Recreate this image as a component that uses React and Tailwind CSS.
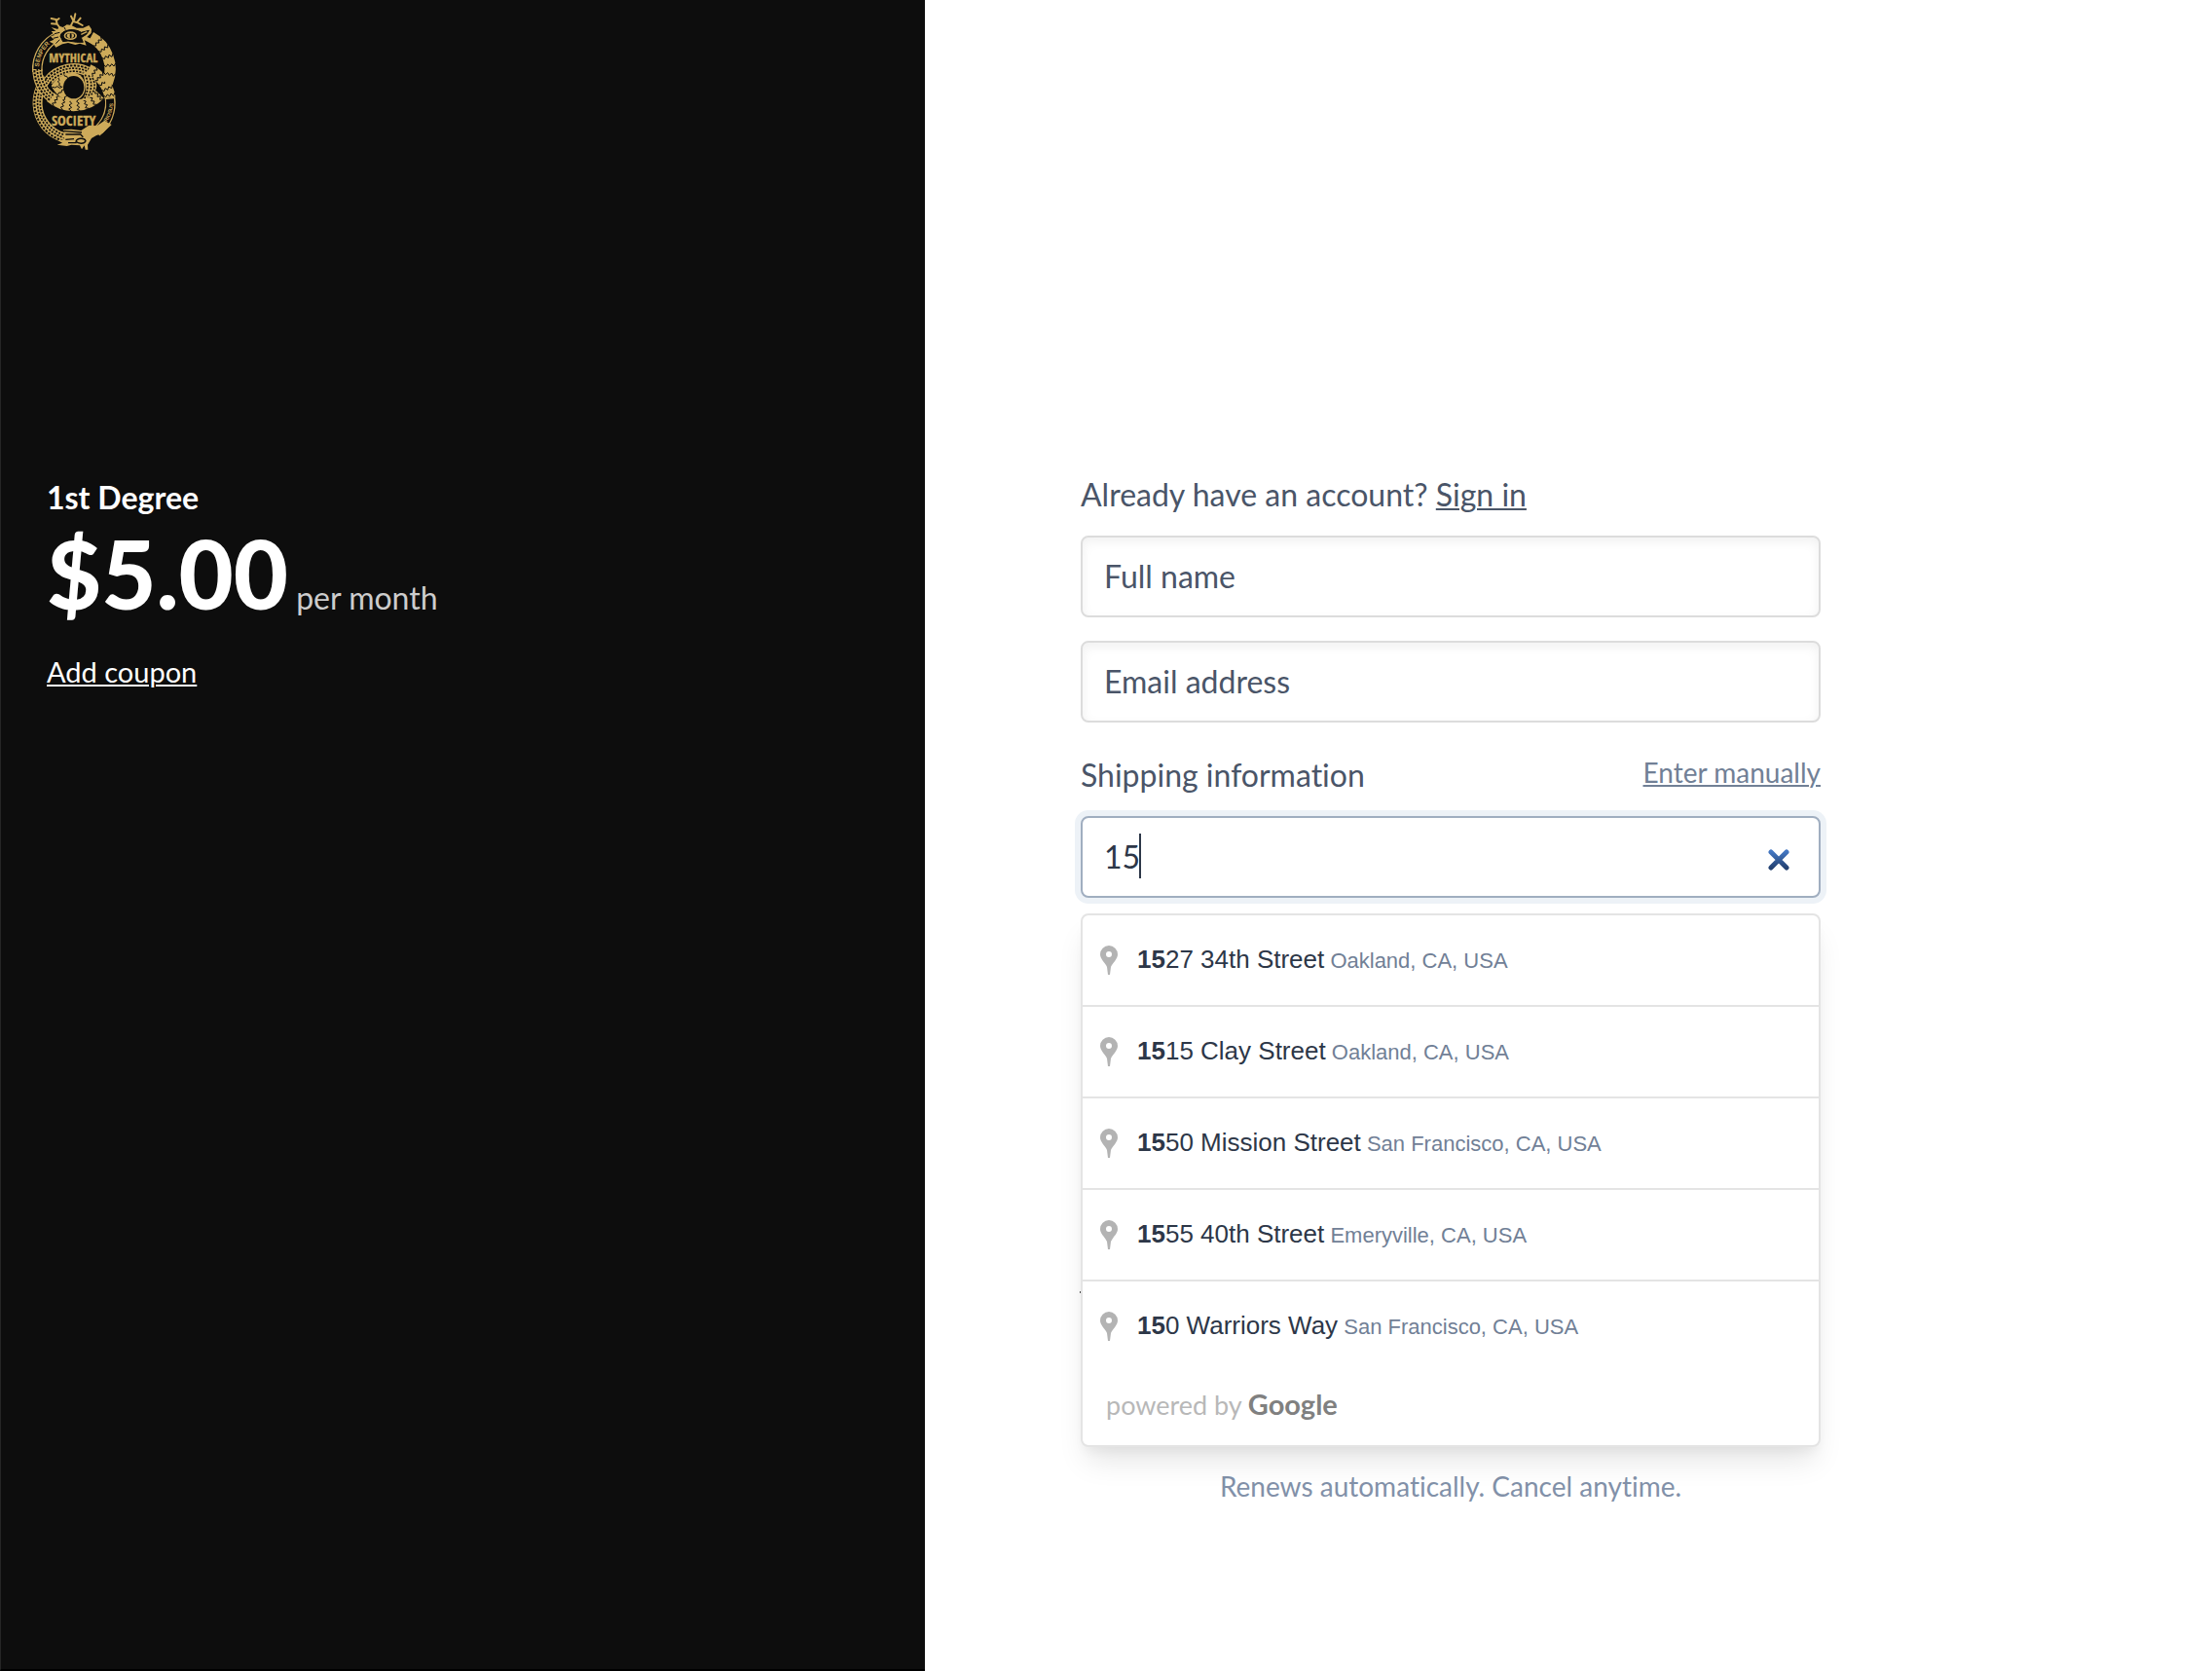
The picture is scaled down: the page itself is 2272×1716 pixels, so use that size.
import { useState } from 'react'

const GOLD = '#cdaa5a'
const INK = '#0d0d0d'

const SUGGESTIONS = [
  { match: '15', rest: '27 34th Street', area: 'Oakland, CA, USA' },
  { match: '15', rest: '15 Clay Street', area: 'Oakland, CA, USA' },
  { match: '15', rest: '50 Mission Street', area: 'San Francisco, CA, USA' },
  { match: '15', rest: '55 40th Street', area: 'Emeryville, CA, USA' },
  { match: '15', rest: '0 Warriors Way', area: 'San Francisco, CA, USA' }
]

const polar = (cx, cy, r, deg) => {
  const a = (deg * Math.PI) / 180
  return [Math.round(cx + r * Math.cos(a)), Math.round(cy + r * Math.sin(a))]
}

// Arc going clockwise from one angle to another, 0deg points right
const arc = (cx, cy, r, from, to) => {
  const [x1, y1] = polar(cx, cy, r, from)
  const [x2, y2] = polar(cx, cy, r, to)
  return `M${x1} ${y1}A${r} ${r} 0 ${to - from > 180 ? 1 : 0} 1 ${x2} ${y2}`
}

// Jagged line across the serpent's body
const zigzag = (cx, cy, r1, r2, deg) => {
  const pts = []
  for (let i = 0; i <= 6; i++) {
    pts.push(polar(cx, cy, r1 + ((r2 - r1) * i) / 6, deg + (i % 2 ? 2 : -2)).join(','))
  }
  return pts.join(' ')
}

function Scales({ cx, cy, r, from, to }) {
  return (
    <g fill="none">
      <path d={arc(cx, cy, r, from, to)} stroke={GOLD} strokeWidth="30" />
      <path d={arc(cx, cy, r + 9, from, to)} stroke={INK} strokeWidth="6" strokeDasharray="7 4" />
      <path d={arc(cx, cy, r, from, to)} stroke={INK} strokeWidth="5" strokeDasharray="6 4" strokeDashoffset="4" />
      <path d={arc(cx, cy, r - 9, from, to)} stroke={INK} strokeWidth="5" strokeDasharray="6 4" />
    </g>
  )
}

function Bands({ cx, cy, r, from, to, angles }) {
  return (
    <g fill="none">
      <path d={arc(cx, cy, r, from, to)} stroke={GOLD} strokeWidth="34" />
      {angles.map(a => (
        <polyline key={a} points={zigzag(cx, cy, r - 18, r + 18, a)} stroke={INK} strokeWidth="3" />
      ))}
    </g>
  )
}

function Logo() {
  return (
    <svg viewBox="36 39 264 426" className="h-[142px] w-[88px]" role="img" aria-label="Mythical Society">
      <defs>
        <path id="semper" d={arc(167, 213, 107, 184, 240)} />
        <path id="curiosus" d="M255 394A120 120 0 0 0 289 306" />
      </defs>

      {/* lower serpent */}
      <Scales cx={167} cy={317} r={112} from={80} to={222} />
      <Scales cx={167} cy={311} r={100} from={218} to={300} />
      <Bands cx={167} cy={317} r={113} from={294} to={352} angles={[304, 315, 326, 337, 348]} />
      <path d={arc(167, 317, 113, 352, 412)} fill="none" stroke={GOLD} strokeWidth="32" />
      <path d={arc(167, 317, 113, 354, 405)} fill="none" stroke={INK} strokeWidth="24" />

      {/* upper serpent */}
      <Bands cx={167} cy={213} r={112} from={-62} to={22} angles={[-48, -34, -20, -6, 8]} />
      <Bands cx={167} cy={213} r={112} from={44} to={130} angles={[47, 59, 71, 83, 95, 107, 120]} />
      <path d={arc(167, 213, 112, 176, 246)} fill="none" stroke={GOLD} strokeWidth="32" />
      <path d={arc(167, 213, 112, 180, 244)} fill="none" stroke={INK} strokeWidth="24" />
      <Scales cx={167} cy={213} r={112} from={128} to={180} />

      {/* eye */}
      <path d="M196 222C224 230 238 246 238 265C236 288 216 308 188 312C204 296 207 280 203 262Z" fill={GOLD} />
      <path d="M225 240C234 256 234 276 221 292M213 232C224 250 224 278 210 300M202 230C213 250 213 278 200 304" fill="none" stroke={INK} strokeWidth="5" strokeDasharray="6 4" />
      <path d="M98 264C112 240 136 226 164 224C188 224 203 245 203 268C203 294 184 309 164 313C132 309 110 290 98 264Z" fill={GOLD} />
      <path d="M120 240l3 7-5 5 6 5-2 6 7 4M101 268l9 2 6-4 8 5 9-4M118 292l4-7 7 0 2-8 8-1M140 307l-1-8 7-3-1-8M137 229l3 6 6 0 3 7" fill="none" stroke={INK} strokeWidth="3" />
      <ellipse cx="167" cy="269" rx="32" ry="35" fill={INK} />

      {/* lettering */}
      <g fill={GOLD} stroke={GOLD} strokeWidth="1" fontFamily="'Open Sans Condensed', 'Roboto Condensed', sans-serif" fontWeight="700" textAnchor="middle">
        <text x="166" y="193" fontSize="38">MYTHICAL</text>
        <text x="167" y="386" fontSize="44">SOCIETY</text>
      </g>
      <g fill={GOLD} fontFamily="'Liberation Sans', sans-serif" fontWeight="700">
        <text fontSize="19"><textPath href="#semper">SEMPER</textPath></text>
        <text fontSize="16"><textPath href="#curiosus">CURIOSUS</textPath></text>
      </g>

      {/* antlered head */}
      <g fill="none" stroke={GOLD} strokeWidth="6" strokeLinecap="round">
        <path d="M128 90L116 74L99 73M116 74L113 60L98 57M113 64L122 57M158 80L166 64L159 50M166 66L180 70L194 78M168 62L172 43M178 68L188 56" />
      </g>
      <path d="M98 96L112 96L98 84L118 90L122 80L134 84L146 76L160 78L176 86L196 86L214 78L222 90L221 102L208 114L228 122L222 134L200 124L206 140L186 134L172 138L150 132L132 136L112 146L104 134L92 128L106 122L96 112L108 108Z" fill={GOLD} />
      <path d="M126 112C128 90 172 86 190 100L214 94L206 106L190 116L196 130L176 130L150 126L134 128ZM108 104L124 100M104 118L120 114M112 134L124 122M138 84L142 92" fill={INK} stroke={INK} strokeWidth="3" />
      <ellipse cx="157" cy="110" rx="20" ry="13" fill={GOLD} />
      <ellipse cx="157" cy="110" rx="15" ry="8" fill={INK} />
      <ellipse cx="157" cy="110" rx="11" ry="7" fill={GOLD} />
      <ellipse cx="158" cy="110" rx="3" ry="8" fill={INK} />
      <path d="M190 106L208 98" stroke={GOLD} strokeWidth="4" />

      {/* lower head */}
      <path d="M262 372L284 384L256 410L236 418L222 426L210 446L211 461L203 461L200 448L192 460L186 448L160 446L146 450L116 446L132 440L118 432L140 430L134 420L140 412L134 400L160 398L190 402L214 386L238 388Z" fill={GOLD} />
      <path d="M136 404L192 408M142 414L188 414L196 422M142 430L168 428M150 440L176 440M174 436C178 424 200 424 204 434C200 444 182 444 174 436Z" fill="none" stroke={INK} strokeWidth="4" />
    </svg>
  )
}

function Pin() {
  return (
    <svg viewBox="0 0 18 30" className="h-[30px] w-[18px] shrink-0" aria-hidden="true">
      <path fillRule="evenodd" fill="#b3b3b3" d="M9 0a9 9 0 0 1 9 9c0 5-5 8.500-7 13L10 30H8L7 22C5 17.500 0 14 0 9a9 9 0 0 1 9-9Zm0 6a3 3 0 1 0 0 6a3 3 0 0 0 0-6Z" />
    </svg>
  )
}

function Field({ label, type }) {
  return (
    <input
      type={type}
      aria-label={label}
      placeholder={label}
      className="h-[84px] w-full rounded-lg border-2 border-[#dcdcdc] bg-white px-[22px] pb-0.5 text-[32px] text-[#2d3748] shadow-[inset_0_4px_12px_rgba(0,0,0,0.06)] outline-none placeholder:text-[#4a5568] placeholder:opacity-100"
    />
  )
}

export default function App() {
  const [address, setAddress] = useState('15')

  return (
    <div className="grid min-h-screen grid-cols-[950fr_1322fr] bg-white font-['Lato',sans-serif] [font-variant-ligatures:none]">
      <aside className="border-b-2 border-l border-b-black border-l-[#262626] bg-[#0d0d0d] text-white">
        <header className="px-[31px] pt-[13px]">
          <Logo />
        </header>
        <div className="mt-[332px] px-[47px]">
          <h1 className="text-[32px] leading-[48px] font-bold">1st Degree</h1>
          <p className="mt-3 flex items-baseline gap-2 leading-[84px]">
            <span className="text-[97px] font-black">$5.00</span>
            <span className="text-[32px] text-[#cccccc]">per month</span>
          </p>
          <button type="button" className="mt-3 text-[29px] leading-[44px] underline decoration-2 underline-offset-2">Add coupon</button>
        </div>
      </aside>

      <main className="px-[160px] pt-[484px]">
        <form className="max-w-[760px]" onSubmit={e => e.preventDefault()}>
          <p className="mb-[18px] text-[32px] leading-[48px] text-[#4a5568]">
            Already have an account? <a href="#signin" className="underline decoration-2 underline-offset-2">Sign in</a>
          </p>
          <div className="flex flex-col gap-6">
            <Field label="Full name" type="text" />
            <Field label="Email address" type="email" />
          </div>

          <div className="mt-[30px] mb-[18px] flex items-start justify-between">
            <label htmlFor="address" className="text-[32px] leading-[48px] text-[#4a5568]">Shipping information</label>
            <a href="#manual" className="text-[28px] leading-[42px] text-[#718096] underline decoration-2 underline-offset-2">Enter manually</a>
          </div>

          <div className="relative">
            <input
              id="address"
              type="text"
              autoComplete="off"
              value={address}
              onChange={e => setAddress(e.target.value)}
              className="block h-[84px] w-full rounded-lg border-2 border-[#a0aec0] bg-white px-[22px] pb-0.5 text-[32px] text-[#2d3748] caret-transparent ring-6 ring-[#edf2f7] outline-none"
            />
            <span className="absolute top-[18px] left-[60px] h-[46px] w-0.5 bg-[#2d3748]" />
            <button type="button" aria-label="Clear address" onClick={() => setAddress('')} className="absolute top-[34px] right-8">
              <svg viewBox="0 0 22 22" className="size-[22px]">
                <defs>
                  <linearGradient id="cross" x1="0" y1="0" x2="0" y2="22" gradientUnits="userSpaceOnUse">
                    <stop offset="0.1" stopColor="#4478c4" />
                    <stop offset="0.9" stopColor="#23406f" />
                  </linearGradient>
                </defs>
                <path d="M3 3L19 19M19 3L3 19" stroke="url(#cross)" strokeWidth="5" strokeLinecap="round" />
              </svg>
            </button>

            <div className="absolute inset-x-0 top-full z-10 mt-4 rounded-lg border-2 border-[#e4e4e4] bg-white font-['Liberation_Sans',Arial,sans-serif] shadow-[0_20px_30px_-6px_rgba(0,0,0,0.1),0_8px_12px_-4px_rgba(0,0,0,0.05)]">
              <ul className="divide-y-2 divide-[#e4e4e4]">
                {SUGGESTIONS.map(s => (
                  <li key={s.rest}>
                    <button type="button" onClick={() => setAddress(s.match + s.rest)} className="flex h-[92px] w-full items-center pl-[18px] text-left">
                      <Pin />
                      <span className="ml-5 pb-0.5 text-[26px] text-[#2d3748]">
                        <b>{s.match}</b>{s.rest}<span className="text-[22px] text-[#718096]"> {s.area}</span>
                      </span>
                    </button>
                  </li>
                ))}
              </ul>
              <p className="flex h-[76px] items-baseline gap-1.5 pt-3.5 pl-6 font-['Lato',sans-serif] text-[27px] leading-[40px] text-[#b8b8b8]">
                powered by <span className="text-[29px] font-bold text-[#808080]">Google</span>
              </p>
            </div>
          </div>

          <hr className="mt-[404px] -ml-px border-t-2 border-[#555555]" />
          <p className="mt-[177px] text-center text-[28px] leading-[42px] text-[#8291a9]">Renews automatically. Cancel anytime.</p>
        </form>
      </main>
    </div>
  )
}
